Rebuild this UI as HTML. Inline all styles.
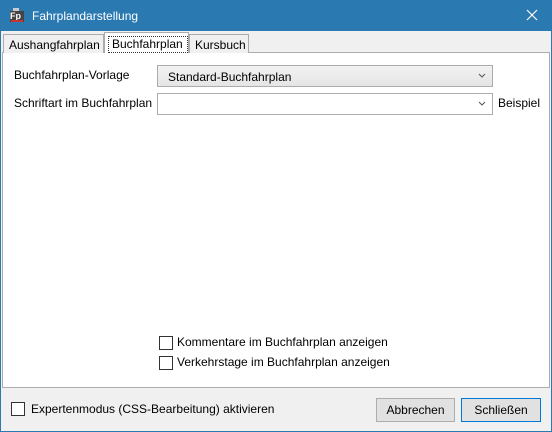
<!DOCTYPE html>
<html><head><style>
*{box-sizing:border-box;margin:0;padding:0}
body{width:552px;height:432px;overflow:hidden;font-family:"Liberation Sans",sans-serif;font-size:12px;color:#000;background:#f0f0f0;position:relative}
.win{position:absolute;left:0;top:0;width:552px;height:432px;border:1px solid #2b79b1;border-top:none}
.title{position:absolute;left:0;top:0;width:552px;height:31px;background:#2b79b1;color:#fff;font-size:12px}
.abs{position:absolute}
.tab{position:absolute;border:1px solid #acacac;border-bottom:none;background:#f0f0f0;padding:3px 0 0 5px;height:19px;top:34px}
.panel{position:absolute;left:2px;top:52px;width:548px;height:336px;background:#fff;border:1px solid #acacac}
.combo{position:absolute;left:157px;width:336px;height:22px;border:1px solid #acacac}
.cb{position:absolute;width:14px;height:14px;border:1px solid #333;background:#fff}
.btn{position:absolute;top:398px;height:24px;border:1px solid #adadad;background:#e1e1e1;text-align:center;line-height:22px}
.arr{position:absolute;right:6px;top:7px}
</style></head><body>
<div class="win"></div>
<div class="title">
 <div class="abs" style="left:10px;top:8px;width:14px;height:14px;">
  <div class="abs" style="left:3px;top:0;width:6px;height:3px;background:#ccc"></div>
  <div class="abs" style="left:0;top:3px;width:14px;height:11px;background:#444;color:#fff;font-size:9px;line-height:11px;font-weight:bold">Fp</div>
  <div class="abs" style="left:1px;top:12px;width:12px;height:2px;background:#c33"></div>
 </div>
 <div class="abs" style="left:32px;top:9px">Fahrplandarstellung</div>
 <svg class="abs" style="left:526px;top:9px" width="12" height="12"><path d="M1 1L11 11M11 1L1 11" stroke="#fff" stroke-width="1.2"/></svg>
</div>
<div class="panel"></div>
<div class="tab" style="left:3px;width:101px">Aushangfahrplan</div>
<div class="tab" style="left:189px;width:60px">Kursbuch</div>
<div class="tab" style="left:104px;top:32px;height:21px;width:85px;background:#fff;padding:3px 0 0 3px">
 <div style="border:1px dotted #333;padding:0 3px;height:17px">Buchfahrplan</div>
</div>
<div class="abs" style="left:14px;top:68px">Buchfahrplan-Vorlage</div>
<div class="abs" style="left:14px;top:96px">Schriftart im Buchfahrplan</div>
<div class="combo" style="top:65px;background:linear-gradient(#f2f2f2,#e5e5e5);padding:4px 0 0 10px">Standard-Buchfahrplan<svg class="arr" width="8" height="6"><path d="M1 1L4 4L7 1" stroke="#555" fill="none"/></svg></div>
<div class="combo" style="top:93px;background:#fff"><svg class="arr" width="8" height="6"><path d="M1 1L4 4L7 1" stroke="#555" fill="none"/></svg></div>
<div class="abs" style="left:498px;top:96px">Beispiel</div>
<div class="cb" style="left:159px;top:336px"></div>
<div class="abs" style="left:177px;top:335px">Kommentare im Buchfahrplan anzeigen</div>
<div class="cb" style="left:159px;top:356px"></div>
<div class="abs" style="left:177px;top:355px">Verkehrstage im Buchfahrplan anzeigen</div>
<div class="cb" style="left:11px;top:402px"></div>
<div class="abs" style="left:31px;top:402px">Expertenmodus (CSS-Bearbeitung) aktivieren</div>
<div class="btn" style="left:376px;width:79px">Abbrechen</div>
<div class="btn" style="left:461px;width:80px;border:1px solid #0078d7">Schließen</div>
</body></html>
